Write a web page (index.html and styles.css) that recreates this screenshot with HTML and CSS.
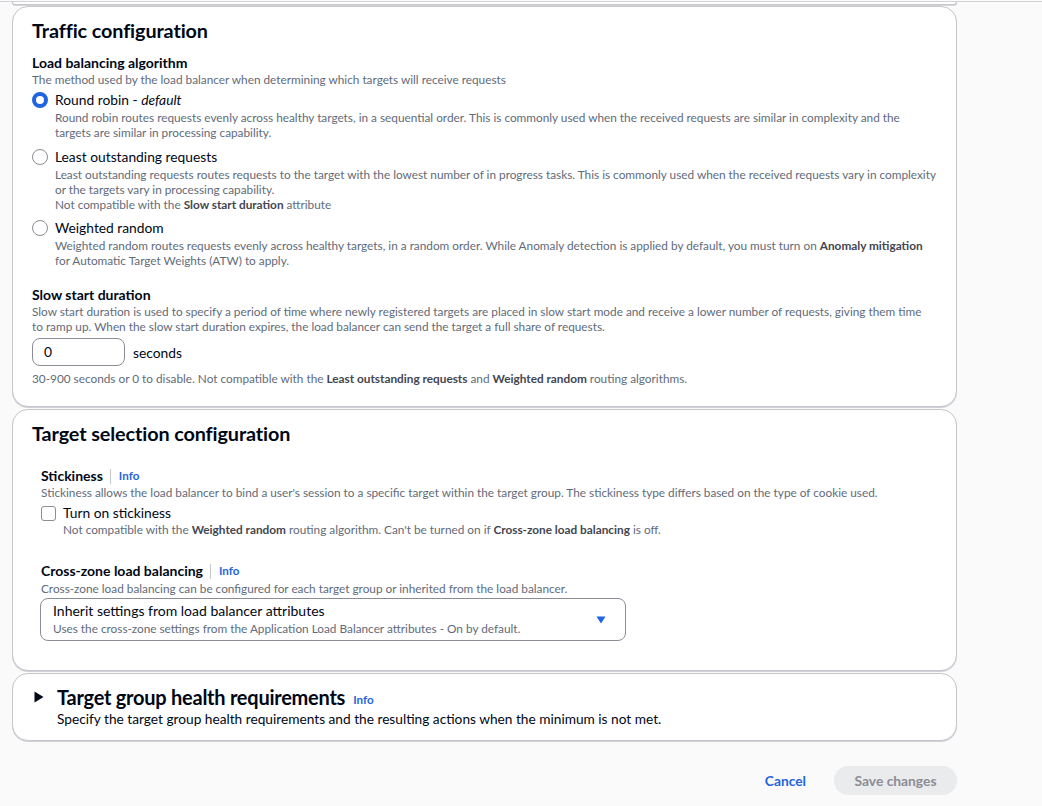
FILE: index.html
```html
<!DOCTYPE html>
<html lang="en">
<head>
<meta charset="utf-8">
<title>Target group attributes</title>
<link rel="stylesheet" href="styles.css">
</head>
<body>
<div class="topline"></div>
<main class="page">
  <div class="prev-card"></div>

  <section class="card card-traffic">
    <h2 class="card-title">Traffic configuration</h2>
    <div class="field">
      <div class="field-label">Load balancing algorithm</div>
      <div class="field-desc">The method used by the load balancer when determining which targets will receive requests</div>
      <div class="radio-group">
        <div class="option">
          <span class="radio checked"></span>
          <div class="option-body">
            <div class="option-label">Round robin - <em>default</em></div>
            <div class="option-desc">Round robin routes requests evenly across healthy targets, in a sequential order. This is commonly used when the received requests are similar in complexity and the targets are similar in processing capability.</div>
          </div>
        </div>
        <div class="option">
          <span class="radio"></span>
          <div class="option-body">
            <div class="option-label">Least outstanding requests</div>
            <div class="option-desc">Least outstanding requests routes requests to the target with the lowest number of in progress tasks. This is commonly used when the received requests vary in complexity or the targets vary in processing capability.<br>Not compatible with the <b>Slow start duration</b> attribute</div>
          </div>
        </div>
        <div class="option">
          <span class="radio"></span>
          <div class="option-body">
            <div class="option-label">Weighted random</div>
            <div class="option-desc">Weighted random routes requests evenly across healthy targets, in a random order. While Anomaly detection is applied by default, you must turn on <b>Anomaly mitigation</b> for Automatic Target Weights (ATW) to apply.</div>
          </div>
        </div>
      </div>
    </div>

    <div class="field field-slow">
      <div class="field-label">Slow start duration</div>
      <div class="field-desc">Slow start duration is used to specify a period of time where newly registered targets are placed in slow start mode and receive a lower number of requests, giving them time to ramp up. When the slow start duration expires, the load balancer can send the target a full share of requests.</div>
      <div class="input-row">
        <div class="text-input">0</div>
        <span class="unit">seconds</span>
      </div>
      <div class="field-constraint">30-900 seconds or 0 to disable. Not compatible with the <b>Least outstanding requests</b> and <b>Weighted random</b> routing algorithms.</div>
    </div>
  </section>

  <section class="card card-target">
    <h2 class="card-title">Target selection configuration</h2>
    <div class="sub-fields">
      <div class="field">
        <div class="field-label">Stickiness<span class="divider"></span><a class="info">Info</a></div>
        <div class="field-desc">Stickiness allows the load balancer to bind a user's session to a specific target within the target group. The stickiness type differs based on the type of cookie used.</div>
        <div class="checkbox-row">
          <span class="checkbox"></span>
          <div class="option-body">
            <div class="option-label">Turn on stickiness</div>
            <div class="option-desc">Not compatible with the <b>Weighted random</b> routing algorithm. Can't be turned on if <b>Cross-zone load balancing</b> is off.</div>
          </div>
        </div>
      </div>
      <div class="field field-cross">
        <div class="field-label">Cross-zone load balancing<span class="divider"></span><a class="info">Info</a></div>
        <div class="field-desc">Cross-zone load balancing can be configured for each target group or inherited from the load balancer.</div>
        <div class="select">
          <div class="select-text">
            <div class="select-value">Inherit settings from load balancer attributes</div>
            <div class="select-desc">Uses the cross-zone settings from the Application Load Balancer attributes - On by default.</div>
          </div>
          <svg class="caret" width="10" height="8" viewBox="0 0 10 8"><path d="M0.5 0.5h9L5 7.5z" fill="#1f64e0"/></svg>
        </div>
      </div>
    </div>
  </section>

  <section class="card card-health">
    <div class="expand-head">
      <svg class="expand-icon" width="10" height="12" viewBox="0 0 10 12"><path d="M0.5 0.5L9.5 6L0.5 11.5z" fill="#000716"/></svg>
      <h2 class="health-title">Target group health requirements</h2>
      <a class="info info-head">Info</a>
    </div>
    <div class="health-desc">Specify the target group health requirements and the resulting actions when the minimum is not met.</div>
  </section>

  <div class="actions">
    <a class="btn-link">Cancel</a>
    <span class="btn-primary">Save changes</span>
  </div>
</main>
</body>
</html>
```

FILE: styles.css
```css
* { box-sizing: border-box; }
html, body { margin: 0; padding: 0; }
body {
  background: #fafafa;
  font-family: Lato, "Open Sans", sans-serif;
  color: #000716;
  width: 1042px;
  height: 806px;
  overflow: hidden;
}
.topline {
  height: 2px;
  border-top: 1px solid #d1d1d6;
  margin-top: 1px;
}
.page {
  width: 945px;
  margin-left: 12px;
}
.prev-card {
  height: 3px;
  background: #fff;
  border: 1px solid #c6c6cd;
  border-top: none;
  border-radius: 0 0 16px 16px;
  box-shadow: 0 1px 0 #d5d5da;
  margin-top: -1px;
  margin-bottom: 1px;
}
.card {
  background: #fff;
  border: 1px solid #c6c6cd;
  border-radius: 16px;
  box-shadow: 0 1px 0 #d0d0d6;
  margin-bottom: 2px;
}
.card-title {
  margin: 0;
  font-size: 19.8px;
  line-height: 22px;
  font-weight: 700;
  letter-spacing: -0.1px;
}
.card-traffic { padding: 12px 20px 18px 19px; height: 401px; }
.card-traffic .card-title { margin-bottom: 13px; }
.field-label {
  font-size: 14px;
  line-height: 18px;
  font-weight: 700;
  display: flex;
  align-items: center;
}
.field-desc, .option-desc, .field-constraint, .select-desc {
  font-size: 11.8px;
  line-height: 15px;
  color: #5f6b7a;
}
.field-desc { margin-bottom: 3px; }
.option-desc b, .field-constraint b { color: #424650; }
.radio-group { display: flex; flex-direction: column; gap: 6.5px; }
.option, .checkbox-row { display: flex; gap: 7px; }
.radio {
  flex: none;
  width: 16px; height: 16px;
  border-radius: 50%;
  border: 1.5px solid #8c8c94;
  margin-top: 2px;
  background: #fff;
}
.radio.checked {
  border: 4.5px solid #1f64e0;
}
.option-label {
  font-size: 13.8px;
  line-height: 20px;
}
.option-label em { font-style: italic; }
.field-slow { margin-top: 18px; }
.field-slow .field-desc { margin-bottom: 4px; padding-right: 4px; }
.input-row { display: flex; align-items: center; gap: 8px; }
.text-input {
  width: 93px; height: 28px;
  border: 1px solid #8c8c94;
  border-radius: 8px;
  padding: 0 11px;
  font-size: 13.8px;
  line-height: 26px;
}
.unit { font-size: 13.8px; }
.field-constraint { margin-top: 5px; }

.card-target { padding: 12px 19px 0; height: 262px; }
.sub-fields { padding: 23px 9px 0; display: flex; flex-direction: column; gap: 25px; }
.sub-fields .option-label { line-height: 18px; }
.divider {
  display: inline-block;
  width: 1px; height: 15px;
  background: #c6c6cd;
  margin: 0 8px 0 7px;
}
.info {
  color: #1f64e0;
  font-weight: 700;
  font-size: 11.6px;
}
.checkbox-row { margin-top: 4px; }
.checkbox {
  flex: none;
  width: 15px; height: 15px;
  border: 1.5px solid #8c8c94;
  border-radius: 3px;
  margin-top: 2px;
}
.field-cross .field-label { margin-bottom: 1px; }
.field-cross .field-desc { margin-bottom: 2px; }
.select {
  width: 586px;
  height: 43px;
  border: 1px solid #8c8c94;
  border-radius: 8px;
  margin-left: -1px;
  padding: 3px 19px 0 12px;
  display: flex;
  align-items: center;
  justify-content: space-between;
}
.select-text { align-self: flex-start; }
.select-value { font-size: 14px; line-height: 18px; }
.select-desc { line-height: 17px; }
.caret { margin-top: -2px; }

.card-health { padding: 11px 19px 12px 21px; height: 68px; }
.expand-head { display: flex; align-items: center; }
.expand-icon { margin-right: 13px; }
.health-title {
  margin: 0;
  font-size: 20px;
  line-height: 24px;
  font-weight: 700;
  letter-spacing: -0.25px;
}
.info-head { margin-left: 8px; margin-top: 4px; }
.health-desc {
  margin-left: 23px;
  margin-top: 1px;
  font-size: 13.7px;
  line-height: 18px;
  color: #000716;
}
.actions {
  display: flex;
  justify-content: flex-end;
  align-items: center;
  gap: 28px;
  margin-top: 25px;
}
.btn-link {
  color: #1f64e0;
  font-weight: 700;
  font-size: 13.8px;
}
.btn-primary {
  width: 123px;
  height: 29px;
  border-radius: 15px;
  background: #e9ebed;
  color: #8c8c94;
  font-weight: 700;
  font-size: 13.8px;
  display: flex;
  align-items: center;
  justify-content: center;
}
```
